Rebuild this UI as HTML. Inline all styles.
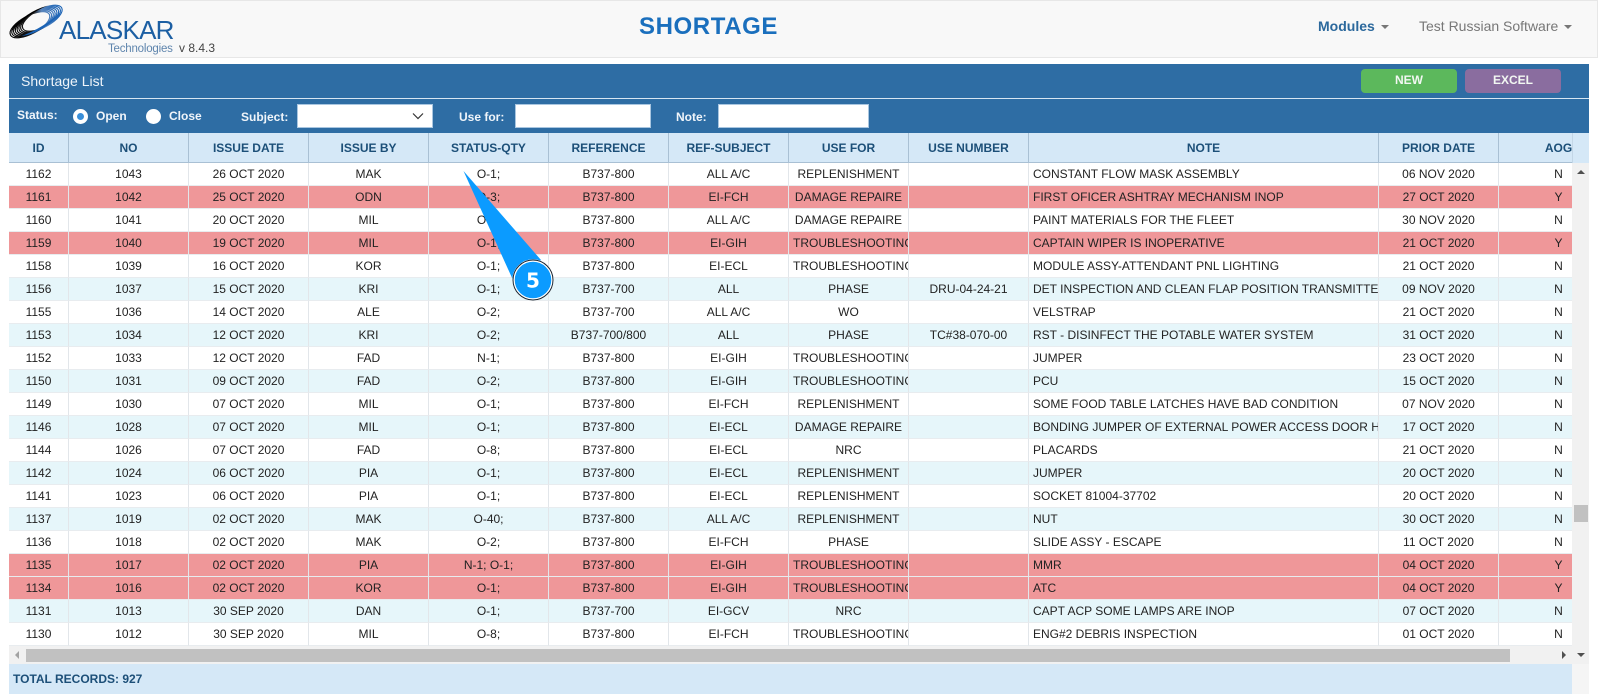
<!DOCTYPE html>
<html><head><meta charset="utf-8"><style>
html,body{margin:0;padding:0;width:1598px;height:696px;overflow:hidden;background:#fff;font-family:"Liberation Sans",sans-serif;}
.a{position:absolute;white-space:nowrap;}
#nav{position:absolute;left:0;top:0;width:1596px;height:56px;background:#f8f8f8;border:1px solid #e7e7e7;}
#panel{position:absolute;left:9px;top:64px;width:1580px;height:69px;background:#2e6da4;}
#line{position:absolute;left:9px;top:98px;width:1580px;height:1px;background:#d7e6f2;}
.lbl{color:#f0f5fa;font-size:12px;font-weight:bold;}
.inp{position:absolute;background:#fff;border:1px solid #a9c6e0;box-sizing:border-box;}
.btn{position:absolute;top:69px;width:96px;height:24px;border-radius:4px;color:#f2f7f2;font-size:12px;font-weight:bold;text-align:center;line-height:23px;}
#tw{position:absolute;left:9px;top:133px;width:1563px;height:513px;overflow:hidden;}
table{border-collapse:separate;border-spacing:0;table-layout:fixed;width:1610px;font-size:12px;color:#222;}
td,th{white-space:nowrap;overflow:hidden;text-align:center;padding:0 4px;box-sizing:border-box;height:23px;border-right:1px solid #e2e6ea;border-bottom:1px solid #e8ecef;font-weight:normal;}
th{height:30px;background:#d5e8f7;color:#1c4f78;font-weight:bold;border-right:1px solid #a9c0d4;border-bottom:1px solid #a9c0d4;}
td.n{text-align:left;}
tr.r td{background:#ef9799;}
tr.b td{background:#e6f6fa;}
tr.w td{background:#fff;}
</style></head><body>
<div id="nav"></div>
<svg class="a" style="left:5px;top:3px" width="62" height="38" viewBox="5 3 62 38">
<defs><linearGradient id="g" gradientUnits="userSpaceOnUse" x1="14" y1="14" x2="58" y2="28"><stop offset="0" stop-color="#000"/><stop offset=".48" stop-color="#222"/><stop offset=".66" stop-color="#5a86bd"/><stop offset="1" stop-color="#1b63b5"/></linearGradient></defs>
<g fill="none" transform="rotate(-28 37 21)" stroke="url(#g)" stroke-width="1.1">
<ellipse cx="29" cy="21" rx="22" ry="9"/>
<ellipse cx="31" cy="21" rx="22" ry="9"/>
<ellipse cx="33" cy="21" rx="22" ry="9"/>
<ellipse cx="35" cy="21" rx="22" ry="9"/>
<ellipse cx="37" cy="21" rx="22" ry="9"/>
<ellipse cx="39" cy="21" rx="22" ry="9"/>
<ellipse cx="41" cy="21" rx="22" ry="9"/>
<ellipse cx="43" cy="21" rx="22" ry="9"/>
<path d="M16 27Q37 35 63 24Q40 30 16 27Z" fill="#1b63b5" stroke="none"/>
<path d="M10 18Q30 7 54 12.500Q32 10 10 18Z" fill="#000" stroke="none"/>
</g>
</svg>
<div class="a" style="left:59px;top:17px;font-size:26px;line-height:26px;color:#1c5fa3;letter-spacing:-.75px;">ALASKAR</div>
<div class="a" style="left:108px;top:42px;font-size:11.5px;line-height:14px;color:#5f85ad;letter-spacing:-.2px;">Technologies</div>
<div class="a" style="left:179px;top:41px;font-size:12px;line-height:14px;color:#444;">v 8.4.3</div>
<div class="a" style="left:639px;top:13px;font-size:24px;line-height:28px;font-weight:bold;color:#1a6fbd;letter-spacing:.6px;">SHORTAGE</div>
<div class="a" style="left:1318px;top:18px;font-size:14px;line-height:17px;font-weight:bold;color:#2b689c;">Modules</div>
<div class="a" style="left:1381px;top:25px;border:4px solid transparent;border-top-color:#777;border-bottom:0;"></div>
<div class="a" style="left:1419px;top:18px;font-size:14px;line-height:17px;color:#777;">Test Russian Software</div>
<div class="a" style="left:1564px;top:25px;border:4px solid transparent;border-top-color:#777;border-bottom:0;"></div>

<div id="panel"></div><div id="line"></div>
<div class="a" style="left:21px;top:73px;font-size:14px;line-height:16px;color:#eef4fa;">Shortage List</div>
<div class="btn" style="left:1361px;background:#5cb85c;">NEW</div>
<div class="btn" style="left:1465px;background:#8a6d9f;">EXCEL</div>

<div class="a lbl" style="left:17px;top:108px;">Status:</div>
<div class="a" style="left:73px;top:109px;width:15px;height:15px;border-radius:50%;background:#3a8fd9;border:4px solid #fff;box-sizing:border-box;"></div>
<div class="a lbl" style="left:96px;top:109px;">Open</div>
<div class="a" style="left:146px;top:109px;width:15px;height:15px;border-radius:50%;background:#fff;"></div>
<div class="a lbl" style="left:169px;top:109px;">Close</div>
<div class="a lbl" style="left:241px;top:110px;">Subject:</div>
<div class="inp" style="left:297px;top:104px;width:136px;height:24px;"></div>
<svg class="a" style="left:412px;top:112px" width="12" height="8"><path d="M1 1.5L6 6.5L11 1.5" fill="none" stroke="#333" stroke-width="1.2"/></svg>
<div class="a lbl" style="left:459px;top:110px;">Use for:</div>
<div class="inp" style="left:515px;top:104px;width:136px;height:24px;"></div>
<div class="a lbl" style="left:676px;top:110px;">Note:</div>
<div class="inp" style="left:718px;top:104px;width:151px;height:24px;"></div>

<div id="tw"><table>
<colgroup><col style="width:60px"><col style="width:120px"><col style="width:120px"><col style="width:120px"><col style="width:120px"><col style="width:120px"><col style="width:120px"><col style="width:120px"><col style="width:120px"><col style="width:350px"><col style="width:120px"><col style="width:120px"></colgroup>
<tr><th>ID</th><th>NO</th><th>ISSUE DATE</th><th>ISSUE BY</th><th>STATUS-QTY</th><th>REFERENCE</th><th>REF-SUBJECT</th><th>USE FOR</th><th>USE NUMBER</th><th>NOTE</th><th>PRIOR DATE</th><th>AOG</th></tr>
<tr class="w"><td>1162</td><td>1043</td><td>26 OCT 2020</td><td>MAK</td><td>O-1;</td><td>B737-800</td><td>ALL A/C</td><td>REPLENISHMENT</td><td></td><td class="n">CONSTANT FLOW MASK ASSEMBLY</td><td>06 NOV 2020</td><td>N</td></tr>
<tr class="r"><td>1161</td><td>1042</td><td>25 OCT 2020</td><td>ODN</td><td>O-3;</td><td>B737-800</td><td>EI-FCH</td><td>DAMAGE REPAIRE</td><td></td><td class="n">FIRST OFICER ASHTRAY MECHANISM INOP</td><td>27 OCT 2020</td><td>Y</td></tr>
<tr class="w"><td>1160</td><td>1041</td><td>20 OCT 2020</td><td>MIL</td><td>O-1;</td><td>B737-800</td><td>ALL A/C</td><td>DAMAGE REPAIRE</td><td></td><td class="n">PAINT MATERIALS FOR THE FLEET</td><td>30 NOV 2020</td><td>N</td></tr>
<tr class="r"><td>1159</td><td>1040</td><td>19 OCT 2020</td><td>MIL</td><td>O-1;</td><td>B737-800</td><td>EI-GIH</td><td>TROUBLESHOOTING</td><td></td><td class="n">CAPTAIN WIPER IS INOPERATIVE</td><td>21 OCT 2020</td><td>Y</td></tr>
<tr class="w"><td>1158</td><td>1039</td><td>16 OCT 2020</td><td>KOR</td><td>O-1;</td><td>B737-800</td><td>EI-ECL</td><td>TROUBLESHOOTING</td><td></td><td class="n">MODULE ASSY-ATTENDANT PNL LIGHTING</td><td>21 OCT 2020</td><td>N</td></tr>
<tr class="b"><td>1156</td><td>1037</td><td>15 OCT 2020</td><td>KRI</td><td>O-1;</td><td>B737-700</td><td>ALL</td><td>PHASE</td><td>DRU-04-24-21</td><td class="n">DET INSPECTION AND CLEAN FLAP POSITION TRANSMITTER</td><td>09 NOV 2020</td><td>N</td></tr>
<tr class="w"><td>1155</td><td>1036</td><td>14 OCT 2020</td><td>ALE</td><td>O-2;</td><td>B737-700</td><td>ALL A/C</td><td>WO</td><td></td><td class="n">VELSTRAP</td><td>21 OCT 2020</td><td>N</td></tr>
<tr class="b"><td>1153</td><td>1034</td><td>12 OCT 2020</td><td>KRI</td><td>O-2;</td><td>B737-700/800</td><td>ALL</td><td>PHASE</td><td>TC#38-070-00</td><td class="n">RST - DISINFECT THE POTABLE WATER SYSTEM</td><td>31 OCT 2020</td><td>N</td></tr>
<tr class="w"><td>1152</td><td>1033</td><td>12 OCT 2020</td><td>FAD</td><td>N-1;</td><td>B737-800</td><td>EI-GIH</td><td>TROUBLESHOOTING</td><td></td><td class="n">JUMPER</td><td>23 OCT 2020</td><td>N</td></tr>
<tr class="b"><td>1150</td><td>1031</td><td>09 OCT 2020</td><td>FAD</td><td>O-2;</td><td>B737-800</td><td>EI-GIH</td><td>TROUBLESHOOTING</td><td></td><td class="n">PCU</td><td>15 OCT 2020</td><td>N</td></tr>
<tr class="w"><td>1149</td><td>1030</td><td>07 OCT 2020</td><td>MIL</td><td>O-1;</td><td>B737-800</td><td>EI-FCH</td><td>REPLENISHMENT</td><td></td><td class="n">SOME FOOD TABLE LATCHES HAVE BAD CONDITION</td><td>07 NOV 2020</td><td>N</td></tr>
<tr class="b"><td>1146</td><td>1028</td><td>07 OCT 2020</td><td>MIL</td><td>O-1;</td><td>B737-800</td><td>EI-ECL</td><td>DAMAGE REPAIRE</td><td></td><td class="n">BONDING JUMPER OF EXTERNAL POWER ACCESS DOOR HAS</td><td>17 OCT 2020</td><td>N</td></tr>
<tr class="w"><td>1144</td><td>1026</td><td>07 OCT 2020</td><td>FAD</td><td>O-8;</td><td>B737-800</td><td>EI-ECL</td><td>NRC</td><td></td><td class="n">PLACARDS</td><td>21 OCT 2020</td><td>N</td></tr>
<tr class="b"><td>1142</td><td>1024</td><td>06 OCT 2020</td><td>PIA</td><td>O-1;</td><td>B737-800</td><td>EI-ECL</td><td>REPLENISHMENT</td><td></td><td class="n">JUMPER</td><td>20 OCT 2020</td><td>N</td></tr>
<tr class="w"><td>1141</td><td>1023</td><td>06 OCT 2020</td><td>PIA</td><td>O-1;</td><td>B737-800</td><td>EI-ECL</td><td>REPLENISHMENT</td><td></td><td class="n">SOCKET 81004-37702</td><td>20 OCT 2020</td><td>N</td></tr>
<tr class="b"><td>1137</td><td>1019</td><td>02 OCT 2020</td><td>MAK</td><td>O-40;</td><td>B737-800</td><td>ALL A/C</td><td>REPLENISHMENT</td><td></td><td class="n">NUT</td><td>30 OCT 2020</td><td>N</td></tr>
<tr class="w"><td>1136</td><td>1018</td><td>02 OCT 2020</td><td>MAK</td><td>O-2;</td><td>B737-800</td><td>EI-FCH</td><td>PHASE</td><td></td><td class="n">SLIDE ASSY - ESCAPE</td><td>11 OCT 2020</td><td>N</td></tr>
<tr class="r"><td>1135</td><td>1017</td><td>02 OCT 2020</td><td>PIA</td><td>N-1; O-1;</td><td>B737-800</td><td>EI-GIH</td><td>TROUBLESHOOTING</td><td></td><td class="n">MMR</td><td>04 OCT 2020</td><td>Y</td></tr>
<tr class="r"><td>1134</td><td>1016</td><td>02 OCT 2020</td><td>KOR</td><td>O-1;</td><td>B737-800</td><td>EI-GIH</td><td>TROUBLESHOOTING</td><td></td><td class="n">ATC</td><td>04 OCT 2020</td><td>Y</td></tr>
<tr class="b"><td>1131</td><td>1013</td><td>30 SEP 2020</td><td>DAN</td><td>O-1;</td><td>B737-700</td><td>EI-GCV</td><td>NRC</td><td></td><td class="n">CAPT ACP SOME LAMPS ARE INOP</td><td>07 OCT 2020</td><td>N</td></tr>
<tr class="w"><td>1130</td><td>1012</td><td>30 SEP 2020</td><td>MIL</td><td>O-8;</td><td>B737-800</td><td>EI-FCH</td><td>TROUBLESHOOTING</td><td></td><td class="n">ENG#2 DEBRIS INSPECTION</td><td>01 OCT 2020</td><td>N</td></tr>
</table></div>

<div class="a" style="left:1572px;top:133px;width:17px;height:30px;background:#d5e8f7;border-left:1px solid #c3d6e6;box-sizing:border-box;"></div>
<div class="a" style="left:1572px;top:163px;width:17px;height:483px;background:#f1f1f1;"></div>
<div class="a" style="left:1574px;top:505px;width:14px;height:17px;background:#c1c1c1;"></div>
<div class="a" style="left:1577px;top:170px;border:4px solid transparent;border-bottom-color:#505050;border-top:0;"></div>
<div class="a" style="left:9px;top:646px;width:1580px;height:18px;background:#f1f1f1;"></div>
<div class="a" style="left:26px;top:649px;width:1484px;height:13px;background:#c1c1c1;"></div>
<div class="a" style="left:15px;top:651px;border:4px solid transparent;border-right-color:#a3a3a3;border-left:0;"></div>
<div class="a" style="left:1562px;top:651px;border:4px solid transparent;border-left-color:#505050;border-right:0;"></div>
<div class="a" style="left:1577px;top:653px;border:4px solid transparent;border-top-color:#505050;border-bottom:0;"></div>

<div class="a" style="left:9px;top:664px;width:1563px;height:30px;background:#d5e8f7;"></div>
<div class="a" style="left:1572px;top:664px;width:17px;height:30px;background:#f5f5f5;"></div>
<div class="a" style="left:13px;top:671px;font-size:12px;line-height:16px;font-weight:bold;color:#1c4f78;">TOTAL RECORDS: 927</div>

<svg class="a" style="left:455px;top:165px" width="110" height="140" viewBox="455 165 110 140">
<path d="M463.500 171L541 260L513 280Z" fill="#0b9bff"/>
<circle cx="533" cy="280" r="19.500" fill="#0b9bff" stroke="#fff" stroke-width="2.500"/>
<circle cx="533" cy="280" r="20" fill="none" stroke="#1a2530" stroke-width="1"/>
<text x="533" y="287.500" text-anchor="middle" font-family="'DejaVu Sans',sans-serif" font-size="20" font-weight="bold" fill="#fff">5</text>
</svg>
</body></html>
